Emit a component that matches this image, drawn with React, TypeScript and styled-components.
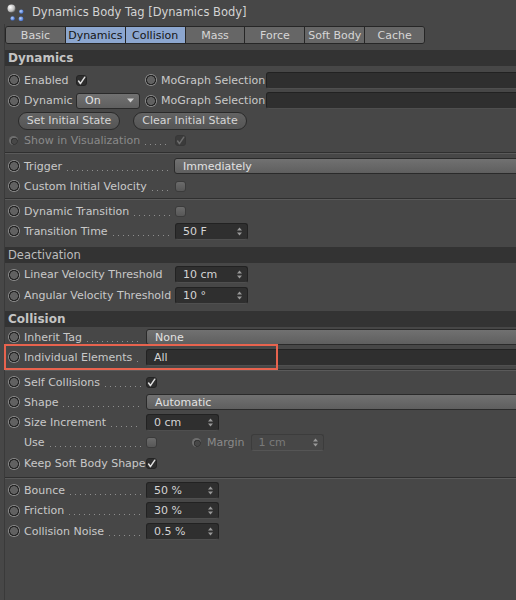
import React from "react";
import styled, { createGlobalStyle } from "styled-components";

const GlobalStyle = createGlobalStyle`
  html, body {
    margin: 0;
    padding: 0;
    background: #474747;
  }
  body {
    font-family: "DejaVu Sans", "Liberation Sans", sans-serif;
    font-size: 11px;
    color: #c9c9c9;
  }
`;

const Window = styled.div`
  width: 516px;
  height: 600px;
  overflow: hidden;
  background: #474747;
`;

const TitleBar = styled.div`
  height: 24px;
  display: flex;
  align-items: center;
  gap: 8px;
  padding-left: 6px;
  color: #d3d3d3;
  font-size: 11.5px;
`;

const Body = styled.div`
  margin-left: 4px;
  border-left: 1px solid #3a3a3a;
  padding-top: 2px;
  min-height: 580px;
`;

const TabBar = styled.div`
  display: flex;
  width: 420px;
  height: 18px;
  border: 1px solid #262626;
  border-radius: 3px;
  overflow: hidden;
  box-sizing: border-box;
`;

const Tab = styled.div<{ $active?: boolean }>`
  flex: 1;
  display: flex;
  align-items: center;
  justify-content: center;
  border-left: 1px solid #262626;
  background: ${(p) => (p.$active ? "#8ca6cf" : "#666666")};
  color: ${(p) => (p.$active ? "#151515" : "#d6d6d6")};
  &:first-child {
    border-left: none;
  }
`;

const SectionHeader = styled.div<{ $bold?: boolean; $top: number }>`
  height: 16px;
  margin-top: ${(p) => p.$top}px;
  background: #333333;
  display: flex;
  align-items: center;
  padding-left: 3px;
  font-weight: ${(p) => (p.$bold ? "bold" : "normal")};
  font-size: ${(p) => (p.$bold ? "12px" : "11.5px")};
  color: ${(p) => (p.$bold ? "#c4c4c4" : "#bdbdbd")};
`;

const Rows = styled.div<{ $top?: number }>`
  padding-top: ${(p) => p.$top ?? 0}px;
`;

const Row = styled.div<{ $h?: number }>`
  position: relative;
  display: flex;
  align-items: center;
  height: ${(p) => p.$h ?? 20}px;
  padding-left: 3px;
`;

const LabelCell = styled.div<{ $w: number }>`
  width: ${(p) => p.$w}px;
  flex: none;
  display: flex;
  align-items: center;
  overflow: hidden;
`;

const Radio = styled.span<{ $hidden?: boolean }>`
  flex: none;
  width: 12px;
  height: 12px;
  margin-right: 4px;
  border-radius: 50%;
  box-sizing: border-box;
  visibility: ${(p) => (p.$hidden ? "hidden" : "visible")};
  background: radial-gradient(
    circle,
    #616161 0 3.6px,
    #262626 4.1px 4.9px,
    #8c8c8c 5.3px 6px
  );
`;

const SmallRadio = styled.span`
  flex: none;
  width: 9px;
  height: 9px;
  margin: 0 6px 0 1px;
  border-radius: 50%;
  background: radial-gradient(
    circle at 60% 60%,
    #474747 0 2.2px,
    #353535 2.6px 3.4px,
    #6e6e6e 3.8px 4.5px
  );
`;

const LabelText = styled.span<{ $dim?: boolean }>`
  white-space: nowrap;
  color: ${(p) => (p.$dim ? "#8a8a8a" : "#c9c9c9")};
`;

const Dots = styled.span`
  flex: 1;
  height: 3px;
  margin: 8px 5px 0 2px;
  background-image: radial-gradient(circle, #8f8f8f 0.6px, transparent 1px);
  background-size: 5px 3px;
  background-repeat: repeat-x;
  background-position: 1px 0;
`;

const Check = styled.span<{ $on?: boolean; $dim?: boolean }>`
  flex: none;
  width: 11px;
  height: 11px;
  box-sizing: border-box;
  border-radius: 3px;
  display: flex;
  align-items: center;
  justify-content: center;
  border: 1px solid ${(p) => (p.$on ? "#242424" : "#3b3b3b")};
  background: ${(p) =>
    p.$on ? "#2e2e2e" : "linear-gradient(#6b6b6b, #575757)"};
  opacity: ${(p) => (p.$dim ? 0.45 : 1)};
`;

const Field = styled.div<{ $w?: number; $disabled?: boolean }>`
  flex: ${(p) => (p.$w ? "none" : "1")};
  width: ${(p) => (p.$w ? `${p.$w}px` : "auto")};
  margin-right: ${(p) => (p.$w ? "0" : "-6px")};
  height: 17px;
  box-sizing: border-box;
  display: flex;
  align-items: center;
  justify-content: space-between;
  padding: 0 5px 0 7px;
  border-radius: 3px;
  border: 1px solid ${(p) => (p.$disabled ? "#3c3c3c" : "#222222")};
  border-bottom-color: ${(p) => (p.$disabled ? "#555" : "#4f4f4f")};
  background: ${(p) => (p.$disabled ? "#474747" : "#2f2f2f")};
  color: ${(p) => (p.$disabled ? "#7a7a7a" : "#d4d4d4")};
`;

const Select = styled.div<{ $w?: number }>`
  flex: ${(p) => (p.$w ? "none" : "1")};
  width: ${(p) => (p.$w ? `${p.$w}px` : "auto")};
  margin-right: ${(p) => (p.$w ? "0" : "-6px")};
  height: 16px;
  box-sizing: border-box;
  display: flex;
  align-items: center;
  justify-content: space-between;
  padding: 0 5px 0 8px;
  border-radius: 3px;
  border: 1px solid #2a2a2a;
  background: linear-gradient(#717171, #5f5f5f);
  color: #e2e2e2;
`;

const ButtonRow = styled.div`
  display: flex;
  gap: 13px;
  height: 19px;
  align-items: center;
  padding-left: 13px;
`;

const PillButton = styled.div<{ $w: number }>`
  width: ${(p) => p.$w}px;
  height: 18px;
  box-sizing: border-box;
  border-radius: 9px;
  border: 1px solid #2a2a2a;
  background: linear-gradient(#636363, #555555);
  color: #d6d6d6;
  display: flex;
  align-items: center;
  justify-content: center;
`;

const Separator = styled.div<{ $top?: number; $bottom?: number }>`
  height: 0;
  margin: ${(p) => p.$top ?? 2}px 0 ${(p) => p.$bottom ?? 2}px;
  border-top: 1px solid #2f2f2f;
  border-bottom: 1px solid #5a5a5a;
`;

const Gap = styled.span<{ $w: number }>`
  flex: none;
  width: ${(p) => p.$w}px;
`;

const Highlight = styled.div`
  position: absolute;
  left: -1px;
  top: -3px;
  width: 274px;
  height: 26px;
  box-sizing: border-box;
  border: 2px solid #e8634e;
  pointer-events: none;
`;

const TagIcon = () => (
  <svg width="18" height="18" viewBox="0 0 18 18">
    <defs>
      <radialGradient id="sph" cx="35%" cy="35%" r="70%">
        <stop offset="0%" stopColor="#ffffff" />
        <stop offset="70%" stopColor="#bdbdbd" />
        <stop offset="100%" stopColor="#6a6a6a" />
      </radialGradient>
      <radialGradient id="blu" cx="40%" cy="40%" r="70%">
        <stop offset="0%" stopColor="#b9d2ff" />
        <stop offset="100%" stopColor="#2f5fc4" />
      </radialGradient>
    </defs>
    <circle cx="5.5" cy="5.5" r="4" fill="url(#sph)" />
    <circle cx="15.3" cy="8.6" r="2.2" fill="url(#blu)" />
    <circle cx="6.6" cy="15.4" r="2.2" fill="url(#blu)" />
    <circle cx="15" cy="15.8" r="2.4" fill="url(#blu)" />
  </svg>
);

const CheckMark = ({ dim }: { dim?: boolean }) => (
  <svg width="9" height="9" viewBox="0 0 9 9">
    <path
      d="M1.6 5 L3.4 7.6 L7.8 1.2"
      fill="none"
      stroke={dim ? "#9a9a9a" : "#e0e0e0"}
      strokeWidth="1.5"
      strokeLinecap="round"
      strokeLinejoin="round"
    />
  </svg>
);

const Spinner = () => (
  <svg width="5" height="9" viewBox="0 0 5 9">
    <path d="M0 3.6 L2.5 0.6 L5 3.6 Z" fill="#9a9a9a" />
    <path d="M0 5.4 L2.5 8.4 L5 5.4 Z" fill="#9a9a9a" />
  </svg>
);

const DropArrow = () => (
  <svg width="7" height="5" viewBox="0 0 7 5">
    <path d="M0 0.5 L7 0.5 L3.5 4.5 Z" fill="#d0d0d0" />
  </svg>
);

const tabs = ["Basic", "Dynamics", "Collision", "Mass", "Force", "Soft Body", "Cache"];

type LabelProps = { w: number; text: string; dots?: boolean; noRadio?: boolean };

const Label = ({ w, text, dots = true, noRadio }: LabelProps) => (
  <LabelCell $w={w}>
    <Radio $hidden={noRadio} />
    <LabelText>{text}</LabelText>
    {dots && <Dots />}
  </LabelCell>
);

const NumField = ({ w, value, disabled }: { w: number; value: string; disabled?: boolean }) => (
  <Field $w={w} $disabled={disabled}>
    <span>{value}</span>
    <Spinner />
  </Field>
);

const DYN = 167;
const COL = 138;

export default function App() {
  return (
    <Window>
      <GlobalStyle />
      <TitleBar>
        <TagIcon />
        <span>Dynamics Body Tag [Dynamics Body]</span>
      </TitleBar>
      <Body>
        <TabBar>
          {tabs.map((t) => (
            <Tab key={t} $active={t === "Dynamics" || t === "Collision"}>
              {t}
            </Tab>
          ))}
        </TabBar>

        <SectionHeader $bold $top={6}>Dynamics</SectionHeader>
        <Rows $top={4}>
          <Row>
            <Label w={68} text="Enabled" dots={false} />
            <Check $on>
              <CheckMark />
            </Check>
            <Gap $w={58} />
            <Label w={121} text="MoGraph Selection" dots={false} />
            <Field />
          </Row>
          <Row $h={21}>
            <Label w={68} text="Dynamic" dots={false} />
            <Select $w={64}>
              <span>On</span>
              <DropArrow />
            </Select>
            <Gap $w={5} />
            <Label w={121} text="MoGraph Selection" dots={false} />
            <Field />
          </Row>
          <ButtonRow>
            <PillButton $w={102}>Set Initial State</PillButton>
            <PillButton $w={114}>Clear Initial State</PillButton>
          </ButtonRow>
          <Row>
            <LabelCell $w={DYN}>
              <SmallRadio />
              <LabelText $dim>Show in Visualization</LabelText>
              <Dots />
            </LabelCell>
            <Check $on $dim>
              <CheckMark dim />
            </Check>
          </Row>
          <Separator />
          <Row>
            <Label w={DYN - 1} text="Trigger" />
            <Select>
              <span>Immediately</span>
            </Select>
          </Row>
          <Row>
            <Label w={DYN} text="Custom Initial Velocity" />
            <Check />
          </Row>
          <Separator $bottom={1} />
          <Row>
            <Label w={DYN} text="Dynamic Transition" />
            <Check />
          </Row>
          <Row>
            <Label w={DYN} text="Transition Time" />
            <NumField w={73} value="50 F" />
          </Row>
        </Rows>

        <SectionHeader $top={6}>Deactivation</SectionHeader>
        <Rows $top={1}>
          <Row $h={21}>
            <Label w={DYN} text="Linear Velocity Threshold" dots={false} />
            <NumField w={73} value="10 cm" />
          </Row>
          <Row $h={21}>
            <Label w={DYN} text="Angular Velocity Threshold" dots={false} />
            <NumField w={73} value="10 °" />
          </Row>
        </Rows>

        <SectionHeader $bold $top={5}>Collision</SectionHeader>
        <Rows>
          <Row>
            <Label w={COL} text="Inherit Tag" />
            <Select>
              <span>None</span>
            </Select>
          </Row>
          <Row>
            <Label w={COL} text="Individual Elements" />
            <Field>
              <span>All</span>
            </Field>
            <Highlight />
          </Row>
          <Separator $bottom={1} />
          <Row>
            <Label w={COL} text="Self Collisions" />
            <Check $on>
              <CheckMark />
            </Check>
          </Row>
          <Row>
            <Label w={COL} text="Shape" />
            <Select>
              <span>Automatic</span>
            </Select>
          </Row>
          <Row>
            <Label w={COL} text="Size Increment" />
            <NumField w={73} value="0 cm" />
          </Row>
          <Row $h={21}>
            <Label w={COL} text="Use" noRadio />
            <Check />
            <Gap $w={34} />
            <SmallRadio />
            <LabelText $dim>Margin</LabelText>
            <Gap $w={6} />
            <NumField w={73} value="1 cm" disabled />
          </Row>
          <Row $h={21}>
            <Label w={COL} text="Keep Soft Body Shape" dots={false} />
            <Check $on>
              <CheckMark />
            </Check>
          </Row>
          <Separator $top={3} $bottom={1} />
          <Row $h={20.5}>
            <Label w={COL} text="Bounce" />
            <NumField w={73} value="50 %" />
          </Row>
          <Row $h={20.5}>
            <Label w={COL} text="Friction" />
            <NumField w={73} value="30 %" />
          </Row>
          <Row $h={20.5}>
            <Label w={COL} text="Collision Noise" />
            <NumField w={73} value="0.5 %" />
          </Row>
        </Rows>
      </Body>
    </Window>
  );
}
